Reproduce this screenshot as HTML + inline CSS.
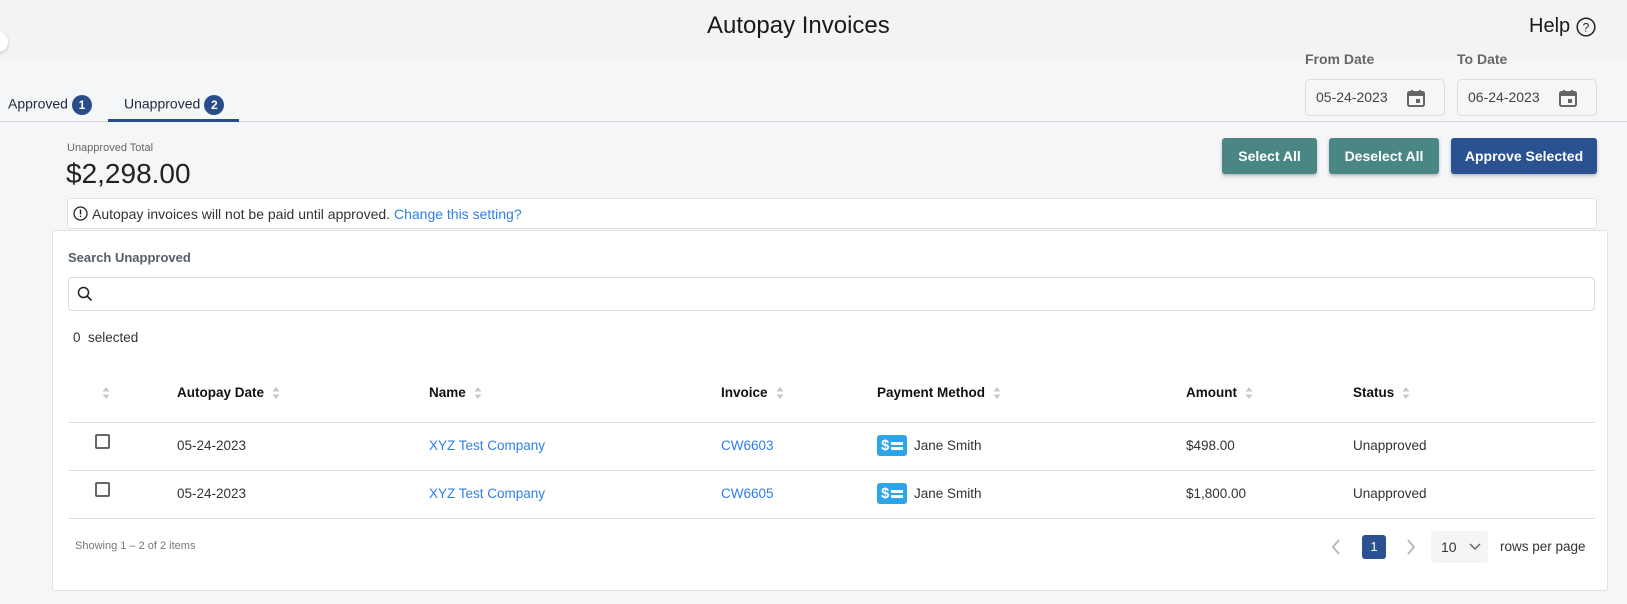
<!DOCTYPE html>
<html><head><meta charset="utf-8"><style>
*{box-sizing:border-box;margin:0;padding:0}
body{width:1627px;height:604px;overflow:hidden;background:#f5f6f8;font-family:"Liberation Sans",sans-serif;color:#222;position:relative}
.a{position:absolute;white-space:nowrap}
.top{position:absolute;left:0;top:0;width:1627px;height:58px;background:#f3f3f3}
.btn{position:absolute;top:138px;height:36px;border-radius:3px;color:#fff;font-weight:bold;font-size:14px;display:flex;align-items:center;justify-content:center;box-shadow:0 2px 3px rgba(0,0,0,.25)}
.badge{display:inline-block;width:20px;height:20px;border-radius:50%;background:#2a4d8a;color:#fff;font-size:12px;font-weight:bold;text-align:center;line-height:20px;vertical-align:middle;margin-left:4px}
.date{position:absolute;top:79px;height:37px;border:1px solid #dcdcdc;border-radius:5px;background:#f6f6f7;font-size:14px;color:#444;padding:9px 0 0 10px}
.th{position:absolute;top:385px;font-weight:bold;font-size:13.5px;color:#111}
.td{position:absolute;font-size:13.5px;color:#333}
.lk{color:#2f7fe6}
.hr{position:absolute;left:68px;width:1527px;height:1px;background:#dedede}
.sort{display:inline-block;width:8px;height:14px;vertical-align:middle;margin-left:8px}
.cb{position:absolute;left:95px;width:15px;height:15px;border:2px solid #666;border-radius:2px}
.pm{position:absolute;left:877px;width:30px;height:21px;background:#2aa6e8;border-radius:3px;color:#fff;font-weight:bold;font-size:15px;line-height:21px;padding-left:4px}
.pm i{position:absolute;left:14px;width:12px;height:2.5px;background:#fff}
</style></head><body>
<div class="top"></div>
<div class="a" style="left:-10px;top:32px;width:18px;height:20px;border-radius:50%;background:#fff;box-shadow:0 1px 3px rgba(0,0,0,.2)"></div>
<div class="a" style="left:707px;top:12px;font-size:24px;color:#1a1a1a">Autopay Invoices</div>
<div class="a" style="left:1529px;top:15px;font-size:20px;color:#1a1a1a">Help</div>
<svg class="a" style="left:1576px;top:17px" width="20" height="20" viewBox="0 0 20 20"><circle cx="10" cy="10" r="8.8" fill="none" stroke="#222" stroke-width="1.5"/><text x="10" y="14.5" text-anchor="middle" font-size="12" font-family="Liberation Sans" fill="#222">?</text></svg>

<div class="a" style="left:1305px;top:51px;font-size:14px;color:#666;font-weight:bold">From Date</div>
<div class="a" style="left:1457px;top:51px;font-size:14px;color:#666;font-weight:bold">To Date</div>
<div class="date" style="left:1305px;width:140px">05-24-2023</div>
<div class="date" style="left:1457px;width:140px">06-24-2023</div>
<svg class="a" style="left:1406px;top:88px" width="20" height="20" viewBox="0 0 20 20"><rect x="2" y="4" width="16" height="14" rx="1.5" fill="none" stroke="#666" stroke-width="2"/><rect x="2" y="4" width="16" height="4" fill="#666"/><rect x="5" y="2" width="2" height="3" fill="#666"/><rect x="13" y="2" width="2" height="3" fill="#666"/><rect x="10" y="11" width="4" height="4" fill="#666"/></svg>
<svg class="a" style="left:1558px;top:88px" width="20" height="20" viewBox="0 0 20 20"><rect x="2" y="4" width="16" height="14" rx="1.5" fill="none" stroke="#666" stroke-width="2"/><rect x="2" y="4" width="16" height="4" fill="#666"/><rect x="5" y="2" width="2" height="3" fill="#666"/><rect x="13" y="2" width="2" height="3" fill="#666"/><rect x="10" y="11" width="4" height="4" fill="#666"/></svg>

<div class="a" style="left:8px;top:95px;font-size:14px;color:#1f2a3a">Approved<span class="badge">1</span></div>
<div class="a" style="left:124px;top:95px;font-size:14px;color:#1f2a3a">Unapproved<span class="badge">2</span></div>
<div class="a" style="left:0;top:121px;width:1627px;height:1px;background:#d4d6da"></div>
<div class="a" style="left:108px;top:119px;width:131px;height:3px;background:#2a4d8a"></div>

<div class="a" style="left:67px;top:142px;font-size:11px;color:#666">Unapproved Total</div>
<div class="a" style="left:66px;top:158px;font-size:28px;color:#222">$2,298.00</div>

<div class="btn" style="left:1222px;width:95px;background:#4a8784">Select All</div>
<div class="btn" style="left:1329px;width:110px;background:#4a8784">Deselect All</div>
<div class="btn" style="left:1451px;width:146px;background:#2a5190">Approve Selected</div>

<div class="a" style="left:67px;top:198px;width:1530px;height:31px;background:#fff;border:1px solid #e2e2e2;border-radius:3px"></div>
<svg class="a" style="left:73px;top:206px" width="15" height="15" viewBox="0 0 15 15"><circle cx="7.5" cy="7.5" r="6.5" fill="none" stroke="#222" stroke-width="1.3"/><rect x="6.8" y="3.6" width="1.4" height="4.8" fill="#222"/><rect x="6.8" y="9.6" width="1.4" height="1.5" fill="#222"/></svg>
<div class="a" style="left:92px;top:206px;font-size:14px;color:#333">Autopay invoices will not be paid until approved. <span class="lk">Change this setting?</span></div>

<div class="a" style="left:52px;top:230px;width:1556px;height:361px;background:#fff;border:1px solid #e2e2e2;border-radius:3px"></div>
<div class="a" style="left:68px;top:250px;font-size:13px;font-weight:bold;color:#555e6a">Search Unapproved</div>
<div class="a" style="left:68px;top:277px;width:1527px;height:34px;border:1px solid #dcdcdc;border-radius:4px;background:#fff"></div>
<svg class="a" style="left:77px;top:286px" width="16" height="16" viewBox="0 0 16 16"><circle cx="6.5" cy="6.5" r="5" fill="none" stroke="#222" stroke-width="1.5"/><line x1="10" y1="10" x2="14.5" y2="14.5" stroke="#222" stroke-width="1.6"/></svg>
<div class="a" style="left:73px;top:330px;font-size:13.5px;color:#333">0&nbsp; selected</div>

<svg class="a" style="left:102px;top:386px" width="8" height="14" viewBox="0 0 8 14"><path d="M4 1L7.5 5.5H0.5Z M4 13L7.5 8.5H0.5Z" fill="#c8c8c8"/></svg>
<div class="th" style="left:177px">Autopay Date<svg class="sort" viewBox="0 0 8 14"><path d="M4 1L7.5 5.5H0.5Z M4 13L7.5 8.5H0.5Z" fill="#c8c8c8"/></svg></div>
<div class="th" style="left:429px">Name<svg class="sort" viewBox="0 0 8 14"><path d="M4 1L7.5 5.5H0.5Z M4 13L7.5 8.5H0.5Z" fill="#c8c8c8"/></svg></div>
<div class="th" style="left:721px">Invoice<svg class="sort" viewBox="0 0 8 14"><path d="M4 1L7.5 5.5H0.5Z M4 13L7.5 8.5H0.5Z" fill="#c8c8c8"/></svg></div>
<div class="th" style="left:877px">Payment Method<svg class="sort" viewBox="0 0 8 14"><path d="M4 1L7.5 5.5H0.5Z M4 13L7.5 8.5H0.5Z" fill="#c8c8c8"/></svg></div>
<div class="th" style="left:1186px">Amount<svg class="sort" viewBox="0 0 8 14"><path d="M4 1L7.5 5.5H0.5Z M4 13L7.5 8.5H0.5Z" fill="#c8c8c8"/></svg></div>
<div class="th" style="left:1353px">Status<svg class="sort" viewBox="0 0 8 14"><path d="M4 1L7.5 5.5H0.5Z M4 13L7.5 8.5H0.5Z" fill="#c8c8c8"/></svg></div>
<div class="hr" style="top:422px"></div>

<div class="cb" style="top:434px"></div>
<div class="td" style="left:177px;top:438px">05-24-2023</div>
<div class="td lk" style="left:429px;top:438px">XYZ Test Company</div>
<div class="td lk" style="left:721px;top:438px">CW6603</div>
<div class="pm" style="top:435px">$<i style="top:7px"></i><i style="top:12px"></i></div>
<div class="td" style="left:914px;top:438px">Jane Smith</div>
<div class="td" style="left:1186px;top:438px">$498.00</div>
<div class="td" style="left:1353px;top:438px">Unapproved</div>
<div class="hr" style="top:470px"></div>

<div class="cb" style="top:482px"></div>
<div class="td" style="left:177px;top:486px">05-24-2023</div>
<div class="td lk" style="left:429px;top:486px">XYZ Test Company</div>
<div class="td lk" style="left:721px;top:486px">CW6605</div>
<div class="pm" style="top:483px">$<i style="top:7px"></i><i style="top:12px"></i></div>
<div class="td" style="left:914px;top:486px">Jane Smith</div>
<div class="td" style="left:1186px;top:486px">$1,800.00</div>
<div class="td" style="left:1353px;top:486px">Unapproved</div>
<div class="hr" style="top:518px"></div>

<div class="a" style="left:75px;top:540px;font-size:11px;color:#777">Showing 1 – 2 of 2 items</div>
<svg class="a" style="left:1330px;top:538px" width="12" height="18" viewBox="0 0 12 18"><path d="M9 2L3 9L9 16" fill="none" stroke="#bbb" stroke-width="2"/></svg>
<div class="a" style="left:1362px;top:535px;width:24px;height:24px;border-radius:3px;background:#2a5190;color:#fff;font-size:13px;text-align:center;line-height:24px">1</div>
<svg class="a" style="left:1405px;top:538px" width="12" height="18" viewBox="0 0 12 18"><path d="M3 2L9 9L3 16" fill="none" stroke="#bbb" stroke-width="2"/></svg>
<div class="a" style="left:1431px;top:531px;width:57px;height:32px;background:#f4f5f7;border-radius:3px;font-size:14px;color:#333;padding:8px 0 0 10px">10</div>
<svg class="a" style="left:1469px;top:543px" width="12" height="8" viewBox="0 0 12 8"><path d="M1 1L6 6L11 1" fill="none" stroke="#666" stroke-width="1.5"/></svg>
<div class="a" style="left:1500px;top:539px;font-size:13.5px;color:#333">rows per page</div>
</body></html>
